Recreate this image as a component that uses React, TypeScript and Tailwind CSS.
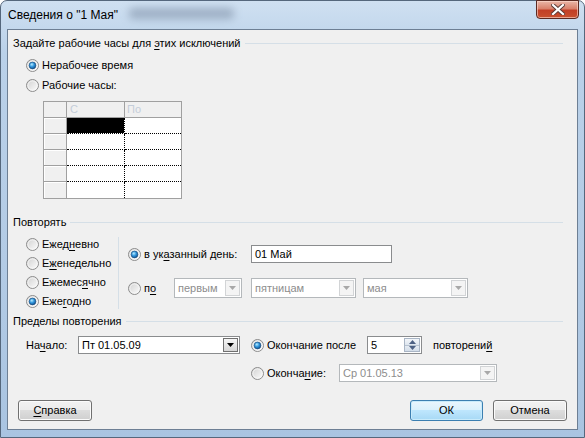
import React from "react";

function Radio({ checked }: { checked?: boolean }) {
  return (
    <svg width="13" height="13" viewBox="0 0 13 13" className="shrink-0 block">
      <defs>
        <linearGradient id="rbg" x1="0" y1="0" x2="1" y2="1">
          <stop offset="0" stopColor="#cfcfcf" />
          <stop offset="1" stopColor="#ffffff" />
        </linearGradient>
        <radialGradient id="rdot" cx="0.4" cy="0.35" r="0.75">
          <stop offset="0" stopColor="#b8ecff" />
          <stop offset="0.45" stopColor="#2f95dc" />
          <stop offset="1" stopColor="#0a3f7a" />
        </radialGradient>
      </defs>
      <circle cx="6.5" cy="6.5" r="6" fill="url(#rbg)" stroke="#8c8c8c" strokeWidth="1" />
      <circle cx="6.5" cy="6.5" r="4.6" fill="none" stroke="#f7f7f7" strokeWidth="0.8" />
      {checked && <circle cx="6.5" cy="6.5" r="3.4" fill="url(#rdot)" stroke="#174a7c" strokeWidth="0.6" />}
    </svg>
  );
}

function U({ children }: { children: React.ReactNode }) {
  return <span className="underline underline-offset-[2px] decoration-[1px]">{children}</span>;
}

function RadioLabel({ checked, children, className = "" }: { checked?: boolean; children: React.ReactNode; className?: string }) {
  return (
    <div className={"flex items-center gap-[3px] " + className}>
      <Radio checked={checked} />
      <span className="whitespace-nowrap leading-none">{children}</span>
    </div>
  );
}

function Header({ children }: { children: React.ReactNode }) {
  return (
    <div className="flex items-center h-[16px] pr-[14px]">
      <span className="whitespace-nowrap leading-none">{children}</span>
      <div className="flex-1 h-px bg-[#d5dfe7] ml-[4px]" />
    </div>
  );
}

function Arrow({ color }: { color: string }) {
  return (
    <svg width="7" height="4" viewBox="0 0 7 4" className="block">
      <path d="M0 0 H7 L3.5 4 Z" fill={color} />
    </svg>
  );
}

function Combo({ text, width, disabled, height = 18 }: { text: string; width: number; disabled?: boolean; height?: number }) {
  return (
    <div
      className={
        "flex items-stretch bg-white border shrink-0 " +
        (disabled ? "border-[#b4b8bb] text-[#8d8d8d]" : "border-[#8a8c8e] text-black")
      }
      style={{ width, height }}
    >
      <div className="flex-1 flex items-center pl-[3px] leading-none whitespace-nowrap overflow-hidden">{text}</div>
      <div
        className={
          "w-[15px] m-[1px] flex items-center justify-center border " +
          (disabled
            ? "border-[#d2d4d6] bg-[#f4f4f4]"
            : "border-[#707070] bg-[linear-gradient(180deg,#f6f6f6_0%,#e6e6e6_50%,#d6d6d6_100%)]")
        }
      >
        <Arrow color={disabled ? "#a8a8a8" : "#000"} />
      </div>
    </div>
  );
}

function Button({ children, def }: { children: React.ReactNode; def?: boolean }) {
  return (
    <div
      className={
        "h-[21px] flex items-center justify-center rounded-[3px] border leading-none " +
        (def
          ? "w-[73px] border-[#3c7fb1] bg-[linear-gradient(180deg,#eaf6fd_0%,#d9f0fc_50%,#bee6fd_50%,#a7d9f5_100%)] shadow-[inset_0_0_0_1px_#c9ebfb]"
          : "w-[74px] border-[#707070] bg-[linear-gradient(180deg,#f2f2f2_0%,#ebebeb_50%,#dddddd_50%,#cfcfcf_100%)] shadow-[inset_0_0_0_1px_#fbfbfb]")
      }
    >
      {children}
    </div>
  );
}

function Grid() {
  const rows = [0, 1, 2, 3, 4];
  return (
    <div className="ml-[30px] w-[139px] border border-[#a0a0a0] bg-white">
      <div className="grid grid-cols-[23px_58px_56px]">
        <div className="h-[16px] bg-[#f0f0f0] border-r border-b border-[#a0a0a0]" />
        <div className="h-[16px] bg-[#f0f0f0] border-r border-b border-[#a0a0a0] text-[#c4cdd9] pl-[3px] flex items-center leading-none">С</div>
        <div className="h-[16px] bg-[#f0f0f0] border-b border-[#a0a0a0] text-[#c4cdd9] pl-[2px] flex items-center leading-none">По</div>
        {rows.map((r) => (
          <React.Fragment key={r}>
            <div
              className={
                "h-[16px] bg-[#f0f0f0] border-r border-[#a0a0a0] shadow-[inset_1px_1px_0_#ffffff] " +
                (r < 4 ? "border-b" : "")
              }
            />
            <div
              className={
                "h-[16px] border-r border-dotted border-black bg-clip-padding " +
                (r < 4 ? "border-b " : "") +
                (r === 0 ? "bg-black" : "bg-white")
              }
            />
            <div className={"h-[16px] bg-white border-dotted border-black " + (r < 4 ? "border-b" : "")} />
          </React.Fragment>
        ))}
      </div>
    </div>
  );
}

function Spin() {
  return (
    <div className="w-[55px] h-[18px] border border-[#8a8c8e] bg-white flex items-stretch shrink-0">
      <div className="flex-1 flex items-center pl-[3px] leading-none">5</div>
      <div className="w-[16px] my-[1px] mr-[1px] flex flex-col border border-[#a9b5c5]">
        <div className="flex-1 flex items-center justify-center bg-[linear-gradient(180deg,#f3f6fa_0%,#dde5ee_100%)] border-b border-[#b7c2d0]">
          <svg width="7" height="4" viewBox="0 0 7 4" className="block">
            <path d="M0 4 H7 L3.5 0 Z" fill="#4d6185" />
          </svg>
        </div>
        <div className="flex-1 flex items-center justify-center bg-[linear-gradient(180deg,#e6ecf3_0%,#d3dde9_100%)]">
          <svg width="7" height="4" viewBox="0 0 7 4" className="block">
            <path d="M0 0 H7 L3.5 4 Z" fill="#4d6185" />
          </svg>
        </div>
      </div>
    </div>
  );
}

export default function App() {
  return (
    <div className="w-[585px] h-[438px] overflow-hidden font-['Liberation_Sans',Arial,sans-serif] text-[11px] text-black">
      <div className="w-[585px] h-[438px] flex flex-col rounded-t-[7px] border border-[#55677c] bg-[linear-gradient(180deg,#cfe0f1_0%,#bad1e9_12%,#b3cbe5_60%,#a9c4e1_100%)] relative">
        {/* title bar */}
        <div className="h-[28px] flex items-center pl-[7px] relative shrink-0">
          <div className="absolute left-[128px] top-[7px] w-[105px] h-[11px] bg-[#7e8fa6] blur-[4px] opacity-60 rounded" />
          <span className="relative text-[12px] leading-none whitespace-nowrap">Сведения о "1 Мая"</span>
          <div className="absolute right-[5px] top-[-1px] w-[43px] h-[19px] rounded-b-[4px] border border-[#5b2a22] bg-[linear-gradient(180deg,#eab7a8_0%,#d9816c_45%,#c23f26_55%,#c8512f_100%)] shadow-[inset_0_0_0_1px_rgba(255,220,210,0.6)] flex items-center justify-center">
            <svg width="14" height="11" viewBox="0 0 14 11" className="block">
              <path d="M2 1 L12 10 M12 1 L2 10" stroke="#5a3a36" strokeWidth="4" strokeLinecap="square" />
              <path d="M2 1 L12 10 M12 1 L2 10" stroke="#ffffff" strokeWidth="2.2" strokeLinecap="square" />
            </svg>
          </div>
        </div>
        {/* body */}
        <div className="flex flex-1">
          <div className="w-[6px] shrink-0" />
          <div className="w-[571px] h-[401px] border border-[#6d7f94] bg-[#f0f0f0] flex flex-col pl-[5px]">
            <div className="mt-[5px]">
              <Header>
                Задайте рабочие часы для <U>э</U>тих исключений
              </Header>
            </div>
            <RadioLabel checked className="mt-[6px] h-[16px] ml-[13px]">
              Нерабочее время
            </RadioLabel>
            <RadioLabel className="mt-[4px] h-[16px] ml-[13px]">Рабочие часы:</RadioLabel>
            <div className="mt-[8px]">
              <Grid />
            </div>
            <div className="mt-[15px]">
              <Header>Повторять</Header>
            </div>
            {/* repeat block */}
            <div className="mt-[5px] h-[76px] flex">
              <div className="w-[105px] pl-[13px] flex flex-col">
                <RadioLabel className="h-[19px]">
                  Ежед<U>н</U>евно
                </RadioLabel>
                <RadioLabel className="h-[19px]">
                  Е<U>ж</U>енедельно
                </RadioLabel>
                <RadioLabel className="h-[19px]">
                  Ежемес<U>я</U>чно
                </RadioLabel>
                <RadioLabel checked className="h-[19px]">
                  Еже<U>г</U>одно
                </RadioLabel>
              </div>
              <div className="w-px mt-[2px] h-[72px] bg-[#d5dfe7]" />
              <div className="pl-[9px] flex flex-col">
                <div className="mt-[10px] h-[18px] flex items-center">
                  <RadioLabel checked className="w-[123px]">
                    в ук<U>а</U>занный день:
                  </RadioLabel>
                  <div className="w-[141px] h-[18px] border border-[#8a8c8e] bg-white flex items-center pl-[3px] leading-none">
                    01 Май
                  </div>
                </div>
                <div className="mt-[15px] h-[20px] flex items-center">
                  <RadioLabel className="w-[46px]">
                    п<U>о</U>
                  </RadioLabel>
                  <Combo text="первым" width={68} height={20} disabled />
                  <div className="w-[9px]" />
                  <Combo text="пятницам" width={105} height={20} disabled />
                  <div className="w-[7px]" />
                  <Combo text="мая" width={105} height={20} disabled />
                </div>
              </div>
            </div>
            <div className="mt-[2px]">
              <Header>Пределы повторения</Header>
            </div>
            {/* limits */}
            <div className="mt-[6px] h-[20px] flex items-center pl-[13px]">
              <span className="w-[52px] leading-none whitespace-nowrap">
                На<U>ч</U>ало:
              </span>
              <Combo text="Пт 01.05.09" width={162} />
              <div className="w-[11px]" />
              <RadioLabel checked className="w-[116px]">
                Окончание после
              </RadioLabel>
              <Spin />
              <span className="ml-[11px] leading-none whitespace-nowrap">
                повторени<U>й</U>
              </span>
            </div>
            <div className="mt-[8px] h-[20px] flex items-center pl-[238px]">
              <RadioLabel className="w-[88px]">
                Оконча<U>н</U>ие:
              </RadioLabel>
              <Combo text="Ср 01.05.13" width={158} disabled />
            </div>
            {/* buttons */}
            <div className="mt-[17px] flex items-center pl-[5px] pr-[10px]">
              <Button>
                <U>С</U>правка
              </Button>
              <div className="flex-1" />
              <Button def>ОК</Button>
              <div className="w-[10px]" />
              <Button>Отмена</Button>
            </div>
          </div>
        </div>
      </div>
    </div>
  );
}
